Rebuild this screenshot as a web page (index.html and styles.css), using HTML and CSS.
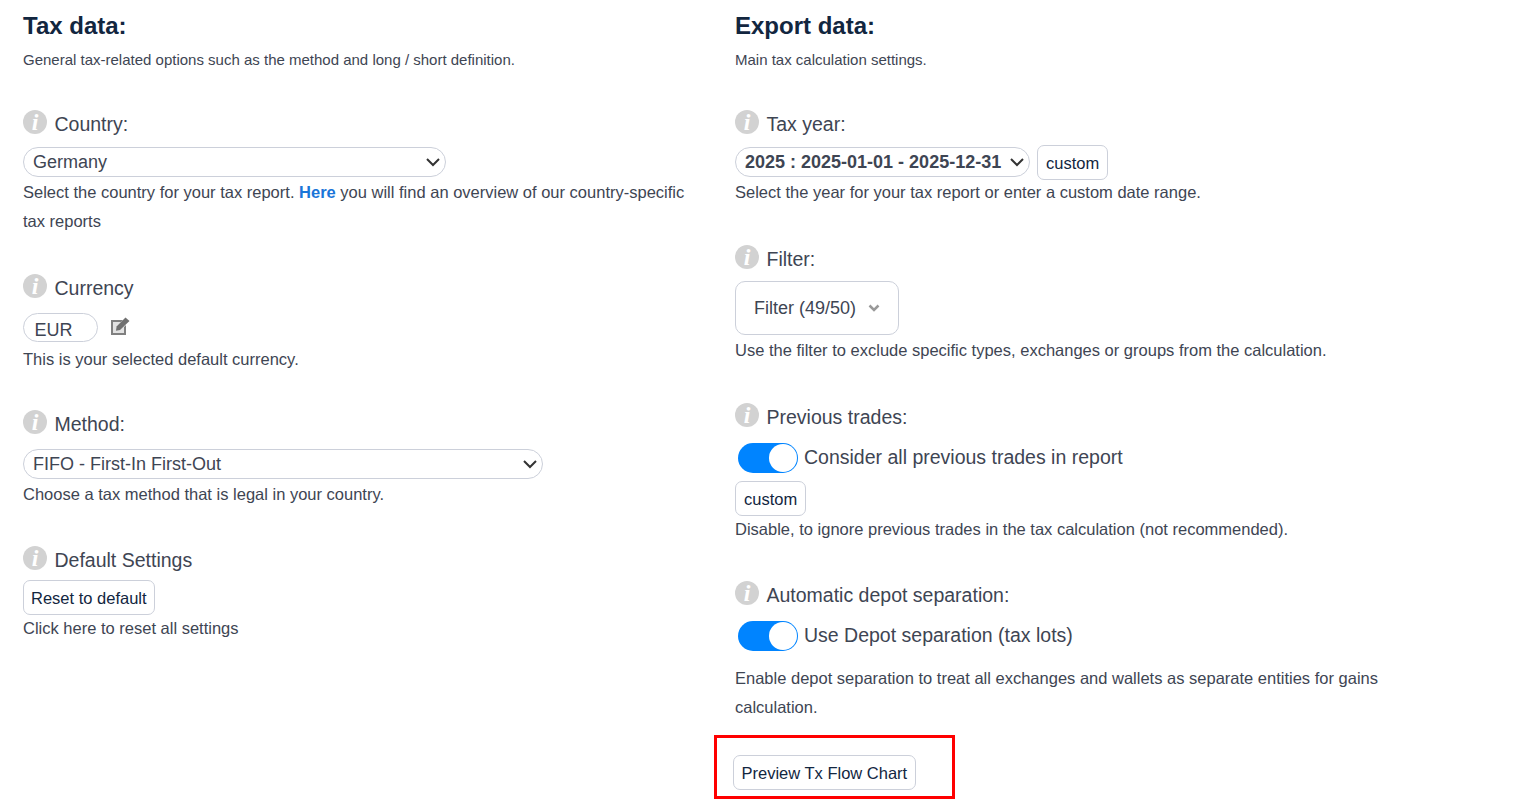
FILE: index.html
```html
<!DOCTYPE html>
<html lang="en">

<head>
    <meta charset="UTF-8">
    <meta name="viewport" content="width=device-width, initial-scale=1.0">
    <title>Tax report settings</title>
    <link rel="stylesheet" href="styles.css">
</head>

<body>
    <div class="columns">
        <div class="column">
            <h2>Tax data:</h2>
            <p class="intro">General tax-related options such as the method and long / short definition.</p>

            <div class="field field-country">
                <div class="label"><span class="info">i</span>Country:</div>
                <select class="select select-country">
                    <option>Germany</option>
                </select>
                <p class="help">Select the country for your tax report. <a href="#">Here</a> you will find an overview of our country-specific tax reports</p>
            </div>

            <div class="field field-currency">
                <div class="label"><span class="info">i</span>Currency</div>
                <div class="currency-row">
                    <span class="currency">EUR</span>
                    <svg class="edit" width="20" height="18" viewBox="0 0 20 18">
                        <path d="M3 5h8l-5 5v3h3l5-5v8H3z" fill="#e2e2e2"></path>
                        <path d="M1 3h12l-2 2H3v11h11v-6l2-2v10H1z" fill="#808080"></path>
                        <path d="M6.500 9.500L15.500.5l4 3.500-9.500 9-4 .7z" fill="#707070"></path>
                    </svg>
                </div>
                <p class="help">This is your selected default currency.</p>
            </div>

            <div class="field field-method">
                <div class="label"><span class="info">i</span>Method:</div>
                <select class="select select-method">
                    <option>FIFO - First-In First-Out</option>
                </select>
                <p class="help">Choose a tax method that is legal in your country.</p>
            </div>

            <div class="field field-default">
                <div class="label"><span class="info">i</span>Default Settings</div>
                <button class="btn">Reset to default</button>
                <p class="help">Click here to reset all settings</p>
            </div>
        </div>

        <div class="column">
            <h2>Export data:</h2>
            <p class="intro">Main tax calculation settings.</p>

            <div class="field field-year">
                <div class="label"><span class="info">i</span>Tax year:</div>
                <div class="year-row">
                    <select class="select select-year">
                        <option>2025 : 2025-01-01 - 2025-12-31</option>
                    </select>
                    <button class="btn btn-custom">custom</button>
                </div>
                <p class="help">Select the year for your tax report or enter a custom date range.</p>
            </div>

            <div class="field field-filter">
                <div class="label"><span class="info">i</span>Filter:</div>
                <button class="filter">Filter (49/50)
                    <svg width="12" height="8" viewBox="0 0 12 8">
                        <path d="M1.500 1.500L6 6l4.500-4.500" fill="none" stroke="#999" stroke-width="2.500"></path>
                    </svg>
                </button>
                <p class="help">Use the filter to exclude specific types, exchanges or groups from the calculation.</p>
            </div>

            <div class="field field-previous">
                <div class="label"><span class="info">i</span>Previous trades:</div>
                <div class="toggle-row"><span class="toggle"></span>Consider all previous trades in report</div>
                <button class="btn btn-custom">custom</button>
                <p class="help">Disable, to ignore previous trades in the tax calculation (not recommended).</p>
            </div>

            <div class="field field-depot">
                <div class="label"><span class="info">i</span>Automatic depot separation:</div>
                <div class="toggle-row"><span class="toggle"></span>Use Depot separation (tax lots)</div>
                <p class="help help-depot">Enable depot separation to treat all exchanges and wallets as separate entities for gains calculation.</p>
            </div>

            <div class="preview-box">
                <button class="btn btn-preview">Preview Tx Flow Chart</button>
            </div>
        </div>
    </div>
</body>

</html>
```

FILE: styles.css
```css
* {
    margin: 0;
    padding: 0;
    box-sizing: border-box;
}

body {
    font-family: "Liberation Sans", Arial, sans-serif;
    font-size: 16px;
    color: #3e4553;
    background: #fff;
}

.columns {
    display: flex;
    padding: 0 0 8px 23px;
}

.column {
    width: 712px;
    padding-right: 25px;
}

h2 {
    padding-top: 12px;
    font-size: 24px;
    line-height: 28px;
    font-weight: bold;
    color: #12263f;
}

.intro {
    margin-top: 10px;
    font-size: 15px;
    line-height: 20px;
}

.field {
    margin-top: 41px;
}

.label {
    display: flex;
    align-items: center;
    height: 26px;
    font-size: 19.500px;
}

.info {
    display: flex;
    justify-content: center;
    align-items: center;
    width: 24px;
    height: 24px;
    margin: -4px 7.500px 0 0;
    border-radius: 50%;
    background: #d2d2d2;
    color: #fff;
    font-family: "Liberation Serif", serif;
    font-size: 24px;
    font-weight: bold;
    font-style: italic;
}

.select {
    display: block;
    height: 30px;
    padding-left: 9px;
    border: 1px solid #ccd0da;
    border-radius: 15px;
    background: #fff url("data:image/svg+xml,%3Csvg xmlns='http://www.w3.org/2000/svg' width='16' height='10'%3E%3Cpath d='M2 2l6 6 6-6' fill='none' stroke='%23333' stroke-width='2'/%3E%3C/svg%3E") no-repeat right 4px center;
    color: #3e4553;
    font-family: inherit;
    font-size: 18px;
    appearance: none;
}

.select-country {
    width: 423px;
}

.select-method {
    width: 520px;
}

.select-year {
    width: 295px;
    font-weight: bold;
}

.help {
    margin-top: 1px;
    font-size: 16.500px;
    line-height: 29px;
}

.help a {
    color: #1a75d8;
    font-weight: bold;
    text-decoration: none;
}

.btn {
    height: 35px;
    padding: 2px 7px 0;
    border: 1px solid #ccd0da;
    border-radius: 7px;
    background: #fff;
    color: #12263f;
    font-family: inherit;
    font-size: 16.500px;
}

.btn-custom {
    padding: 2px 8px 0;
}

.btn-preview {
    padding: 2px 7.500px 0;
}

.field-country .select {
    margin-top: 10px;
}

.field-currency {
    margin-top: 39px;
}

.currency-row {
    display: flex;
    align-items: flex-start;
    gap: 12px;
    margin-top: 12px;
}

.currency {
    width: 75px;
    height: 29px;
    padding: 5px 10.500px;
    border: 1px solid #ccd0da;
    border-radius: 15px;
    font-size: 18px;
    line-height: 22px;
}

.edit {
    margin-top: 4px;
}

.field-currency .help {
    margin-top: 3px;
}

.field-method {
    margin-top: 37px;
}

.field-method .select {
    margin-top: 12px;
}

.field-default {
    margin-top: 38px;
}

.field-default .btn {
    display: block;
    margin-top: 7px;
}

.field-default .help {
    margin-top: -1px;
}

.year-row {
    display: flex;
    gap: 7px;
    margin-top: 8px;
}

.select-year {
    margin-top: 2px;
}

.field-year .help {
    margin-top: -2px;
}

.field-filter {
    margin-top: 39px;
}

.filter {
    display: flex;
    align-items: center;
    gap: 12px;
    height: 54px;
    margin-top: 9px;
    padding: 0 18px;
    border: 1px solid #ccd0da;
    border-radius: 10px;
    background: #fff;
    color: #3e4553;
    font-family: inherit;
    font-size: 18px;
}

.field-previous {
    margin-top: 39px;
}

.toggle-row {
    display: flex;
    align-items: flex-start;
    gap: 6px;
    height: 30px;
    margin-top: 13px;
    padding-left: 3px;
    font-size: 19.500px;
    line-height: 28px;
}

.toggle {
    position: relative;
    width: 60px;
    height: 30px;
    border-radius: 15px;
    background: #0084ff;
}

.toggle::after {
    content: "";
    position: absolute;
    top: 1px;
    right: 1px;
    width: 28px;
    height: 28px;
    border-radius: 50%;
    background: #fff;
}

.field-previous .btn {
    display: block;
    margin-top: 8px;
}

.field-previous .help {
    margin-top: -1px;
}

.field-depot {
    margin-top: 38px;
}

.help-depot {
    margin-top: 13px;
    max-width: 660px;
}

.preview-box {
    width: 241px;
    height: 64px;
    margin: 13px 0 0 -21px;
    padding: 17px 0 0 16px;
    border: 3px solid #f00;
}
```
